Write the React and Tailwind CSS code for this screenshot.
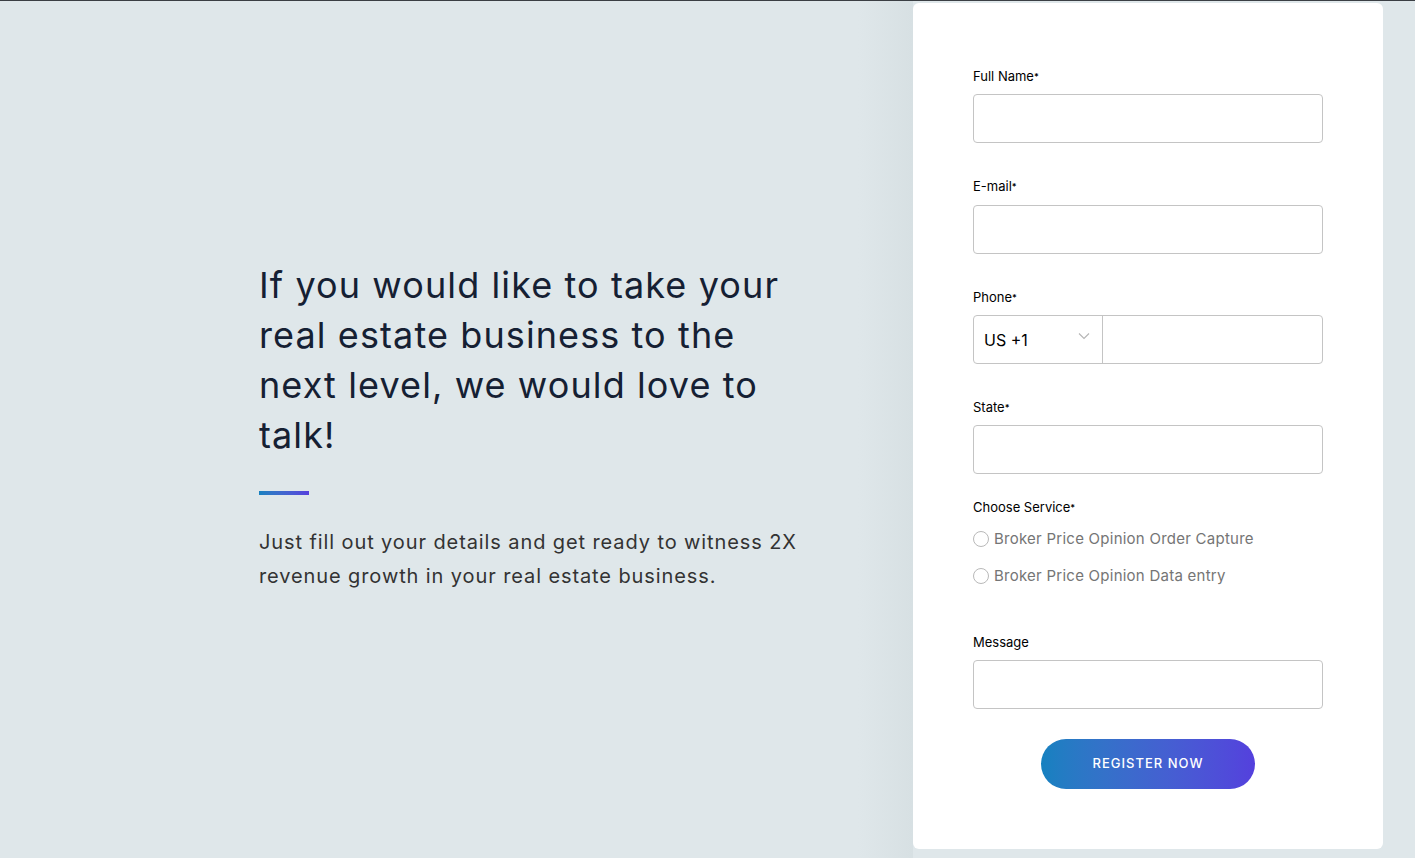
import React from "react";

const Field = ({ label, required = true, gap = "mb-[10px]", children }) => (
  <div className="flex flex-col">
    <label className={`text-[13px] text-black leading-4 ${gap}`}>
      {label}
      {required && <sup className="text-[9px] font-semibold relative top-[-1px]">*</sup>}
    </label>
    {children}
  </div>
);

const TextBox = () => (
  <input className="h-[49px] w-full border border-[#c4c4c4] rounded-[4px] px-3 outline-none bg-white" />
);

export default function App() {
  return (
    <div
      className="h-[858px] w-full bg-[#dfe7ea] border-t-[1px] border-[#3b3f44] flex overflow-hidden"
      style={{ fontFamily: "Inter, 'Noto Sans', sans-serif" }}
    >
      <div className="flex-1 flex items-center pl-[259px] relative">
        <div className="w-[560px] pb-[6px]">
          <h1 className="w-[535px] text-[36px] leading-[50px] text-[#152033] font-normal tracking-[1.1px]">
            If you would like to take your real estate business to the next level, we would love to talk!
          </h1>
          <div className="w-[50px] h-[4px] mt-[31px] bg-gradient-to-r from-[#1581c0] to-[#5540dd]" />
          <p className="mt-[30px] text-[20px] leading-[34px] text-[#333] w-[560px] tracking-[0.9px]">
            Just fill out your details and get ready to witness 2X revenue growth in your real estate business.
          </p>
        </div>
        <div className="absolute right-0 top-0 bottom-0 w-[55px] bg-gradient-to-r from-transparent to-[#d7e0e3]" />
      </div>
      <div className="w-[470px] shrink-0 mt-[2px] mb-[9px] mr-[32px] bg-white rounded-[6px] px-[60px] pt-[65px]">
        <div className="flex flex-col gap-[35px]">
          <Field label="Full Name">
            <TextBox />
          </Field>
          <Field label="E-mail" gap="mb-[11px]">
            <TextBox />
          </Field>
          <Field label="Phone">
            <div className="h-[49px] flex border border-[#c4c4c4] rounded-[4px]">
              <div className="w-[129px] shrink-0 border-r border-[#c4c4c4] flex items-center justify-between pl-[10px] pr-[12px]">
                <span className="text-[16px] text-black">US +1</span>
                <svg width="12" height="8" viewBox="0 0 12 8" className="-mt-[8px]">
                  <path d="M1 1.5 L6 6.5 L11 1.5" fill="none" stroke="#b5b5b5" strokeWidth="1.1" />
                </svg>
              </div>
              <input className="flex-1 min-w-0 outline-none px-3 rounded-r-[4px]" />
            </div>
          </Field>
          <Field label="State">
            <TextBox />
          </Field>
        </div>
        <div className="mt-[25px]">
          <div className="text-[13px] text-black leading-4">
            Choose Service<sup className="text-[9px] font-semibold relative top-[-1px]">*</sup>
          </div>
          <div className="mt-[15px] flex flex-col gap-[19px]">
            {["Broker Price Opinion Order Capture", "Broker Price Opinion Data entry"].map((s) => (
              <label key={s} className="flex items-center gap-[5px] text-[15px] text-[#757575] leading-[18px] tracking-[0.25px]">
                <span className="w-[16px] h-[16px] rounded-full border border-[#b9b9b9] bg-white" />
                {s}
              </label>
            ))}
          </div>
        </div>
        <div className="mt-[49px]">
          <Field label="Message" required={false}>
            <TextBox />
          </Field>
        </div>
        <div className="flex justify-center mt-[30px]">
          <button className="w-[214px] h-[50px] rounded-full bg-gradient-to-r from-[#1581c0] to-[#5440dd] text-white text-[13px] font-medium tracking-[1px]">
            REGISTER NOW
          </button>
        </div>
      </div>
    </div>
  );
}
